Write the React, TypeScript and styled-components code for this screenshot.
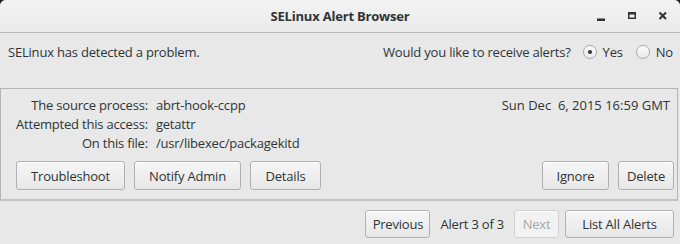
import React from "react";
import styled, { createGlobalStyle } from "styled-components";

const Global = createGlobalStyle`
  html, body { margin: 0; padding: 0; background: #1e1e1e; }
  body {
    font-family: "Open Sans", "DejaVu Sans", sans-serif;
    font-size: 13px;
    letter-spacing: -0.2px;
    color: #2e3436;
  }
  * { box-sizing: border-box; }
`;

const Window = styled.div`
  width: 680px;
  height: 244px;
  background: #e8e8e8;
  border-radius: 6px 6px 0 0;
  overflow: hidden;
  display: flex;
  flex-direction: column;
`;

const TitleBar = styled.div`
  height: 33px;
  flex: none;
  display: grid;
  grid-template-columns: 1fr auto 1fr;
  align-items: center;
  background: linear-gradient(#f3f3f3, #eaeaea);
  border-bottom: 1px solid #b8b8b8;
`;

const Title = styled.div`
  grid-column: 2;
  font-weight: bold;
  font-size: 13px;
  color: #2e3436;
`;

const Controls = styled.div`
  grid-column: 3;
  justify-self: end;
  display: flex;
  align-items: center;
  gap: 15px;
  padding-right: 9px;
`;

const CtrlIcon = styled.svg`
  width: 16px;
  height: 16px;
  display: block;
  color: #2e3436;
`;

const Header = styled.div`
  height: 55px;
  flex: none;
  display: flex;
  align-items: flex-start;
  justify-content: space-between;
  padding: 10px 7px 0 8px;
  line-height: 18px;
`;

const AlertPrompt = styled.div`
  display: flex;
  align-items: center;
`;

const RadioLabel = styled.label<{ $gap: number }>`
  display: flex;
  align-items: center;
  gap: 6px;
  margin-left: ${(p) => p.$gap}px;
`;

const RadioCircle = styled.span<{ $checked?: boolean }>`
  width: 14px;
  height: 14px;
  border-radius: 50%;
  border: 1px solid #a9a9a9;
  background: linear-gradient(#fbfbfb, #e9e9e9);
  display: inline-flex;
  align-items: center;
  justify-content: center;
  &::after {
    content: "";
    width: 4px;
    height: 4px;
    border-radius: 50%;
    background: #2e3436;
    display: ${(p) => (p.$checked ? "block" : "none")};
  }
`;

const Panel = styled.div`
  flex: none;
  margin: 0 2px 0 0;
  border: 1px solid #b4b4b4;
  border-bottom: 2px solid #c2c2c2;
  padding: 7px 3px 9px 15px;
  height: 113px;
  display: flex;
  flex-direction: column;
`;

const InfoRow = styled.div`
  display: flex;
  justify-content: space-between;
`;

const InfoGrid = styled.div`
  display: grid;
  grid-template-columns: auto auto;
  column-gap: 8px;
  row-gap: 1px;
  line-height: 18px;
`;

const Label = styled.span`
  text-align: right;
`;

const DateText = styled.div`
  line-height: 18px;
  padding-right: 4px;
  letter-spacing: 0;
`;

const ActionRow = styled.div`
  margin-top: auto;
  display: flex;
  gap: 9px;
`;

const Spacer = styled.div`
  flex: 1;
`;

const Button = styled.button<{ $disabled?: boolean; $w: number; $h?: number }>`
  width: ${(p) => p.$w}px;
  height: ${(p) => p.$h ?? 29}px;
  padding: 0;
  font-family: inherit;
  font-size: 13px;
  letter-spacing: -0.2px;
  color: ${(p) => (p.$disabled ? "#a5a8a8" : "#2e3436")};
  background: ${(p) =>
    p.$disabled ? "#f2f2f2" : "linear-gradient(#f6f6f6, #e7e7e7)"};
  border: 1px solid ${(p) => (p.$disabled ? "#d0d0d0" : "#b0b0b0")};
  border-radius: 3px;
  box-shadow: inset 0 1px #ffffff;
`;

const Footer = styled.div`
  flex: 1;
  display: flex;
  align-items: flex-start;
  justify-content: flex-end;
  padding: 9px 6px 0 0;
  gap: 10px;
`;

const Counter = styled.span`
  line-height: 28px;
`;

const NavGroup = styled.div`
  display: flex;
  gap: 6px;
`;

export default function App() {
  return (
    <>
      <Global />
      <Window>
        <TitleBar>
          <Title>SELinux Alert Browser</Title>
          <Controls>
            <CtrlIcon viewBox="0 0 16 16">
              <rect x="4" y="10.5" width="8" height="2.5" fill="currentColor" />
            </CtrlIcon>
            <CtrlIcon viewBox="0 0 16 16">
              <rect x="4.75" y="4.75" width="6.5" height="5.5" fill="none" stroke="currentColor" strokeWidth="1.5" />
              <rect x="4" y="4" width="8" height="2.5" fill="currentColor" />
            </CtrlIcon>
            <CtrlIcon viewBox="0 0 16 16">
              <path d="M4.5 4.5 L11 11 M11 4.5 L4.5 11" stroke="currentColor" strokeWidth="2" fill="none" />
            </CtrlIcon>
          </Controls>
        </TitleBar>
        <Header>
          <span>SELinux has detected a problem.</span>
          <AlertPrompt>
            <span>Would you like to receive alerts?</span>
            <RadioLabel $gap={12}>
              <RadioCircle $checked />
              Yes
            </RadioLabel>
            <RadioLabel $gap={13}>
              <RadioCircle />
              No
            </RadioLabel>
          </AlertPrompt>
        </Header>
        <Panel>
          <InfoRow>
            <InfoGrid>
              <Label>The source process:</Label>
              <span>abrt-hook-ccpp</span>
              <Label>Attempted this access:</Label>
              <span>getattr</span>
              <Label>On this file:</Label>
              <span>/usr/libexec/packagekitd</span>
            </InfoGrid>
            <DateText>Sun Dec&nbsp; 6, 2015 16:59 GMT</DateText>
          </InfoRow>
          <ActionRow>
            <Button $w={109}>Troubleshoot</Button>
            <Button $w={107}>Notify Admin</Button>
            <Button $w={71}>Details</Button>
            <Spacer />
            <Button $w={67}>Ignore</Button>
            <Button $w={56}>Delete</Button>
          </ActionRow>
        </Panel>
        <Footer>
          <Button $w={65} $h={28}>Previous</Button>
          <Counter>Alert 3 of 3</Counter>
          <NavGroup>
            <Button $w={45} $h={28} $disabled>Next</Button>
            <Button $w={109} $h={28}>List All Alerts</Button>
          </NavGroup>
        </Footer>
      </Window>
    </>
  );
}
